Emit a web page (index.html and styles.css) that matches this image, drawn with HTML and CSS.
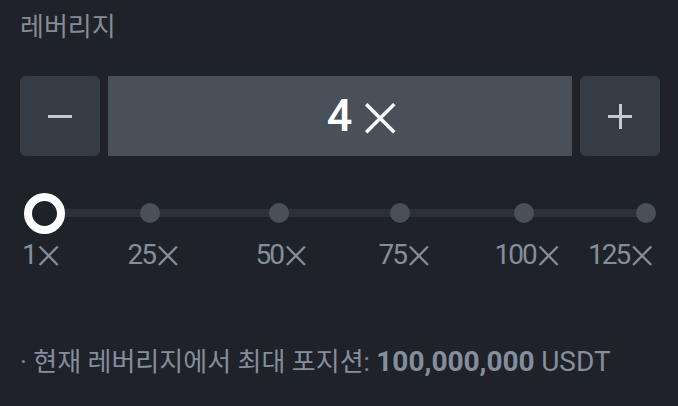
FILE: index.html
```html
<!DOCTYPE html>
<html lang="ko">
<head>
  <meta charset="UTF-8">
  <meta name="viewport" content="width=device-width, initial-scale=1.0">
  <title>레버리지</title>
  <link rel="stylesheet" href="styles.css">
</head>
<body>
  <div class="panel">
    <h1 class="title">레버리지</h1>

    <div class="stepper">
      <button class="step minus" type="button" aria-label="감소"></button>
      <div class="value">4<span class="times">×</span></div>
      <button class="step plus" type="button" aria-label="증가"></button>
    </div>

    <div class="slider">
      <div class="track"></div>
      <span class="dot d25"></span>
      <span class="dot d50"></span>
      <span class="dot d75"></span>
      <span class="dot d100"></span>
      <span class="dot d125"></span>
      <span class="thumb"></span>
    </div>

    <div class="marks">
      <span class="mark m1">1<span class="x">×</span></span>
      <span class="mark m25">25<span class="x">×</span></span>
      <span class="mark m50">50<span class="x">×</span></span>
      <span class="mark m75">75<span class="x">×</span></span>
      <span class="mark m100">100<span class="x">×</span></span>
      <span class="mark m125">125<span class="x">×</span></span>
    </div>

    <p class="note">· 현재 레버리지에서 최대 포지션: <b>100,000,000</b> <span class="unit">USDT</span></p>
  </div>
</body>
</html>
```
FILE: styles.css
```css
body {
  margin: 0;
  background: #1f2228;
  font-family: Roboto, "Noto Sans CJK KR", sans-serif;
  color: #848e9c;
}
.panel {
  padding: 0 18px 0 20px;
}
.title {
  margin: 12px 0 0 0;
  font-size: 26px;
  line-height: 30px;
  font-weight: 400;
  color: #868c97;
}
.stepper {
  display: flex;
  gap: 8px;
  height: 80px;
  margin-top: 34px;
}
.step {
  position: relative;
  width: 80px;
  flex: none;
  border: none;
  border-radius: 6px;
  background: #363c45;
  padding: 0;
}
.step::before,
.step::after {
  content: "";
  position: absolute;
  left: 28px;
  top: 39px;
  width: 24px;
  height: 3px;
  background: #c6c9cf;
}
.minus::after {
  display: none;
}
.plus::after {
  left: 38.5px;
  top: 28px;
  width: 3px;
  height: 25px;
}
.value {
  flex: 1;
  display: flex;
  align-items: center;
  justify-content: center;
  padding-left: 47px;
  background: #4a505a;
  color: #fff;
  font-size: 45px;
  line-height: 50px;
  font-weight: 500;
}
.times {
  font-family: "Noto Sans", sans-serif;
  font-weight: 300;
  font-size: 70px;
  line-height: 0;
  margin-left: 8px;
  vertical-align: -12px;
}
.slider {
  position: relative;
  height: 42px;
  margin-top: 36px;
}
.track {
  position: absolute;
  left: 25px;
  right: 14px;
  top: 17px;
  height: 8px;
  background: #2b3039;
}
.dot {
  position: absolute;
  top: 11px;
  width: 20px;
  height: 20px;
  margin-left: -10px;
  border-radius: 50%;
  background: #4a505a;
}
.d25 { left: 130px; }
.d50 { left: 259px; }
.d75 { left: 380px; }
.d100 { left: 504px; }
.d125 { left: 626px; }
.thumb {
  position: absolute;
  left: 4px;
  top: 1px;
  width: 25px;
  height: 25px;
  border: 8px solid #fff;
  border-radius: 50%;
  background: #1f2228;
}
.marks {
  position: relative;
  height: 30px;
  margin-top: 6px;
  font-size: 28px;
  line-height: 30px;
  letter-spacing: -2px;
}
.mark {
  position: absolute;
  top: 0;
  white-space: nowrap;
  transform: translateX(-50%);
}
.x {
  font-family: "Noto Sans", sans-serif;
  font-weight: 300;
  font-size: 45px;
  line-height: 0;
  letter-spacing: 0;
  vertical-align: -8px;
}
.m1 { left: 2px; transform: none; }
.m25 { left: 134px; }
.m50 { left: 262px; }
.m75 { left: 385px; }
.m100 { left: 508px; }
.m125 { left: auto; right: 5px; transform: none; }
.note {
  margin: 77px 0 0 0;
  font-size: 26px;
  line-height: 30px;
  color: #848e9c;
}
.note b {
  font-size: 28px;
  font-weight: 700;
}
.unit {
  font-size: 28px;
}
```
